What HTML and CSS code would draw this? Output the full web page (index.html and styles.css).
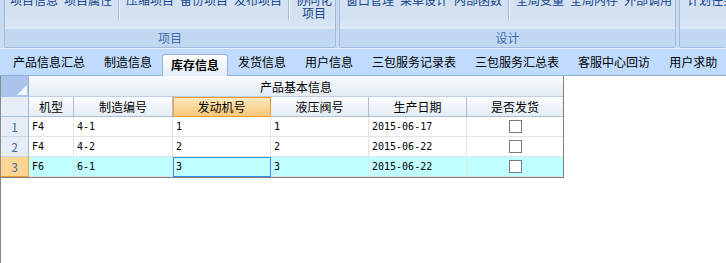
FILE: index.html
```html
<!DOCTYPE html>
<html lang="zh-CN">
<head>
    <meta charset="UTF-8">
    <title>产品信息管理</title>
    <link rel="stylesheet" href="styles.css">
</head>
<body>
    <div class="ribbon">
        <div class="group g1">
            <div class="group-body">
                <span class="btn">项目信息</span>
                <span class="btn">项目属性</span>
                <i class="sep"></i>
                <span class="btn">压缩项目</span>
                <span class="btn">备份项目</span>
                <span class="btn">发布项目</span>
                <i class="sep"></i>
                <span class="btn tall">协同化<br>项目</span>
            </div>
            <div class="group-label">项目</div>
        </div>
        <div class="group g2">
            <div class="group-body">
                <span class="btn">窗口管理</span>
                <span class="btn">菜单设计</span>
                <span class="btn">内部函数</span>
                <i class="sep"></i>
                <span class="btn">全局变量</span>
                <span class="btn">全局内存</span>
                <span class="btn">外部调用</span>
            </div>
            <div class="group-label">设计</div>
        </div>
        <div class="group g3">
            <div class="group-body">
                <span class="btn">计划任务</span>
            </div>
            <div class="group-label"></div>
        </div>
    </div>

    <div class="tabs">
        <span class="tab">产品信息汇总</span>
        <span class="tab">制造信息</span>
        <span class="tab active">库存信息</span>
        <span class="tab">发货信息</span>
        <span class="tab">用户信息</span>
        <span class="tab">三包服务记录表</span>
        <span class="tab">三包服务汇总表</span>
        <span class="tab">客服中心回访</span>
        <span class="tab">用户求助</span>
    </div>

    <div class="panel">
        <table class="grid">
            <colgroup>
                <col class="w-rh">
                <col class="w-type">
                <col class="w-mid">
                <col class="w-mid">
                <col class="w-mid">
                <col class="w-mid">
                <col class="w-last">
            </colgroup>
            <tr>
                <th class="corner"><svg width="10" height="10" viewBox="0 0 10 10"><polygon points="0,10 10,10 10,0" fill="#f4f8fd"/></svg></th>
                <th class="gh" colspan="6">产品基本信息</th>
            </tr>
            <tr>
                <th class="rh"></th>
                <th class="ch">机型</th>
                <th class="ch">制造编号</th>
                <th class="ch sel">发动机号</th>
                <th class="ch">液压阀号</th>
                <th class="ch">生产日期</th>
                <th class="ch">是否发货</th>
            </tr>
            <tr>
                <td class="rh">1</td>
                <td>F4</td>
                <td>4-1</td>
                <td>1</td>
                <td>1</td>
                <td>2015-06-17</td>
                <td class="mid"><span class="chk"></span></td>
            </tr>
            <tr>
                <td class="rh">2</td>
                <td>F4</td>
                <td>4-2</td>
                <td>2</td>
                <td>2</td>
                <td>2015-06-22</td>
                <td class="mid"><span class="chk"></span></td>
            </tr>
            <tr class="cur">
                <td class="rh">3</td>
                <td>F6</td>
                <td>6-1</td>
                <td class="focus">3</td>
                <td>3</td>
                <td>2015-06-22</td>
                <td class="mid"><span class="chk"></span></td>
            </tr>
        </table>
    </div>
</body>
</html>
```

FILE: styles.css
```css
* {
    margin: 0;
    padding: 0;
    box-sizing: border-box;
}
body {
    font-family: "Noto Sans CJK SC", sans-serif;
    font-size: 12px;
    background-color: #ffffff;
    width: 726px;
    height: 263px;
    overflow: hidden;
}

/* ribbon */
.ribbon {
    display: flex;
    gap: 3px;
    height: 49px;
    padding-left: 4px;
    background-color: #c8dbf1;
    border-bottom: 1px solid #e9f1fa;
}
.group {
    height: 48px;
    display: flex;
    flex-direction: column;
    border: 1px solid #9fbbdd;
    border-top: 0;
    border-radius: 0 0 3px 3px;
    background: linear-gradient(#d3e1f2 0, #d3e1f2 19px, #dce8f6 29px);
    overflow: hidden;
}
.g1 { width: 332px; }
.g2 { width: 337px; }
.g3 { flex: 1; border-right: 0; }
.group-body {
    flex: 1;
    display: flex;
    align-items: flex-start;
    gap: 6px;
    padding-left: 5px;
}
.g2 .group-body { gap: 6px; padding-left: 6px; }
.g3 .group-body { padding-left: 7px; }
.btn {
    margin-top: -7px;
    line-height: 13px;
    color: #15428b;
    white-space: nowrap;
}
.tall {
    text-align: center;
    width: 36px;
}
.sep {
    width: 2px;
    height: 20px;
    border-left: 1px solid #a2bcdb;
    border-right: 1px solid #eef4fb;
}
.group-label {
    height: 18px;
    line-height: 17px;
    background-color: #c2d8f1;
    color: #3e6bb0;
    text-align: center;
}

/* tabs */
.tabs {
    display: flex;
    align-items: flex-start;
    gap: 1px;
    height: 27px;
    padding-left: 4px;
    background-color: #bfdbff;
    border-bottom: 1px solid #8eaedb;
}
.tab {
    padding: 0 9px;
    line-height: 26px;
    color: #000000;
    white-space: nowrap;
}
.tab.active {
    margin-top: 5px;
    height: 22px;
    padding: 0 8px;
    line-height: 19px;
    font-weight: bold;
    background: linear-gradient(#fdfeff, #e4eefa);
    border: 1px solid #99b4d8;
    border-bottom: 0;
    border-radius: 3px 3px 0 0;
}

/* grid */
.panel {
    height: 187px;
    border-left: 1px solid #8a8a8a;
    background-color: #ffffff;
}
.grid {
    table-layout: fixed;
    width: 563px;
    border-collapse: separate;
    border-spacing: 0;
    border-right: 1px solid #7f7f7f;
    border-bottom: 1px solid #7f7f7f;
}
.w-rh { width: 28px; }
.w-type { width: 45px; }
.w-mid { width: 98px; }
.w-mid:nth-child(3) { width: 99px; }
.w-last { width: 96px; }
.grid th,
.grid td {
    height: 20px;
    padding: 0 3px;
    border-right: 1px solid #e4e4e4;
    border-bottom: 1px solid #e4e4e4;
    white-space: nowrap;
    overflow: hidden;
    font-weight: normal;
    text-align: left;
}
.grid td {
    font-family: "DejaVu Sans Mono", monospace;
    font-size: 10px;
    color: #000000;
}
.grid tr > :last-child { border-right: 0; }
.grid .corner {
    height: 21px;
    padding: 0 1px 2px 0;
    text-align: right;
    vertical-align: bottom;
    line-height: 0;
    background-color: #a9c5eb;
    border-right: 1px solid #9bb4d6;
    border-bottom: 0;
}
.grid .gh {
    text-align: center;
    background: linear-gradient(#f9fbfd, #e4ebf4);
    border-bottom: 1px solid #c1cfe2;
}
.grid .ch {
    text-align: center;
    background: linear-gradient(#fafcfe, #e5ecf5);
    border-right: 1px solid #abbfd9;
    border-bottom: 1px solid #abbfd9;
}
.grid .ch.sel {
    background: linear-gradient(#fdebc3, #f8c677);
    border-right-color: #f19a38;
    border-bottom-color: #f19a38;
    box-shadow: inset 1px 1px 0 #f19a38;
}
.grid .rh {
    font-family: "Noto Sans CJK SC", sans-serif;
    font-size: 12px;
    text-align: center;
    color: #3c6ea8;
    background-color: #e6edf6;
    border-right: 1px solid #9fb6d5;
    border-bottom: 1px solid #c8d5e7;
}
.grid th.rh {
    border-bottom-color: #abbfd9;
}
.grid .mid { text-align: center; }
.cur td { background-color: #c0ffff; }
.grid .cur .rh {
    background-color: #ffd592;
    border-right-color: #f19a38;
    border-bottom-color: #f19a38;
}
.grid .focus {
    outline: 1px solid #3a8ee8;
    outline-offset: -1px;
}
.chk {
    display: inline-block;
    width: 13px;
    height: 13px;
    vertical-align: middle;
    border: 1px solid #7a7a7a;
    background-color: #ffffff;
}
```
